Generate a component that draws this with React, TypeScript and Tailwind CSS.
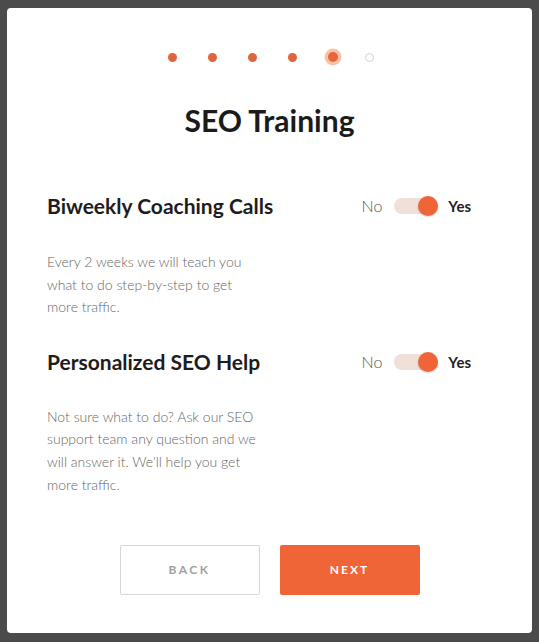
import React from "react";

const Dot = ({ state }: { state: "done" | "active" | "todo" }) => {
  if (state === "active")
    return <div className="w-[10px] h-[10px] rounded-full bg-[#e8643a] shadow-[0_0_0_3.5px_#f9c3a8]" />;
  if (state === "todo")
    return <div className="ml-[-4px] w-[9px] h-[9px] rounded-full border-[1.5px] border-[#d2d2d2]" />;
  return <div className="w-[9px] h-[9px] rounded-full bg-[#e0643c]" />;
};

const Toggle = () => (
  <div className="flex items-center">
    <span className="text-[16px] text-[#555] font-light">No</span>
    <div className="relative ml-[12px] w-[44px] h-[16px] rounded-full bg-[#f1dfd9]">
      <div className="absolute right-0 top-[-2px] w-[20px] h-[20px] rounded-full bg-[#f06537] shadow-[0_1px_2px_rgba(0,0,0,0.2)]" />
    </div>
    <span className="ml-[10px] text-[15px] font-bold text-[#222]">Yes</span>
  </div>
);

const Option = ({ title, text, gap }: { title: string; text: string[]; gap: string }) => (
  <div>
    <div className="flex items-center justify-between h-[28px]">
      <h2 className="text-[21px] leading-[28px] font-bold text-[#1d1d1d]">{title}</h2>
      <Toggle />
    </div>
    <div className={`${gap} text-[14px] leading-[22.6px] text-[#666] font-light`}>
      {text.map((t) => (
        <div key={t}>{t}</div>
      ))}
    </div>
  </div>
);

export default function App() {
  return (
    <div
      className="min-h-screen bg-[#4b4b4b] pt-[8px] pb-[9px] px-[7px]"
      style={{ fontFamily: "Lato, 'Open Sans', sans-serif" }}
    >
      <div className="bg-white rounded-[4px] h-[625px] flex flex-col">
        {/* steps */}
        <div className="flex items-center justify-center gap-[31px] mt-[41px] h-[16px] pl-[3px]">
          <Dot state="done" />
          <Dot state="done" />
          <Dot state="done" />
          <Dot state="done" />
          <Dot state="active" />
          <Dot state="todo" />
        </div>

        <h1 className="mt-[35px] text-center text-[30px] font-bold text-[#1b1b1b] leading-[40px]">
          SEO Training
        </h1>

        <div className="pl-[40px] pr-[61px] mt-[52px] flex flex-col gap-[29px]">
          <Option
            gap="mt-[31px]"
            title="Biweekly Coaching Calls"
            text={["Every 2 weeks we will teach you", "what to do step-by-step to get", "more traffic."]}
          />
          <Option
            gap="mt-[30px]"
            title="Personalized SEO Help"
            text={[
              "Not sure what to do? Ask our SEO",
              "support team any question and we",
              "will answer it. We'll help you get",
              "more traffic.",
            ]}
          />
        </div>

        <div className="flex justify-center gap-[20px] mt-[49px]">
          <button className="w-[140px] h-[50px] border border-[#d6d6d6] rounded-[2px] text-[12px] font-bold tracking-[2.5px] text-[#a0a0a0]">
            BACK
          </button>
          <button className="w-[140px] h-[50px] bg-[#f06537] rounded-[2px] text-[12px] font-bold tracking-[2px] text-white">
            NEXT
          </button>
        </div>
      </div>
    </div>
  );
}
